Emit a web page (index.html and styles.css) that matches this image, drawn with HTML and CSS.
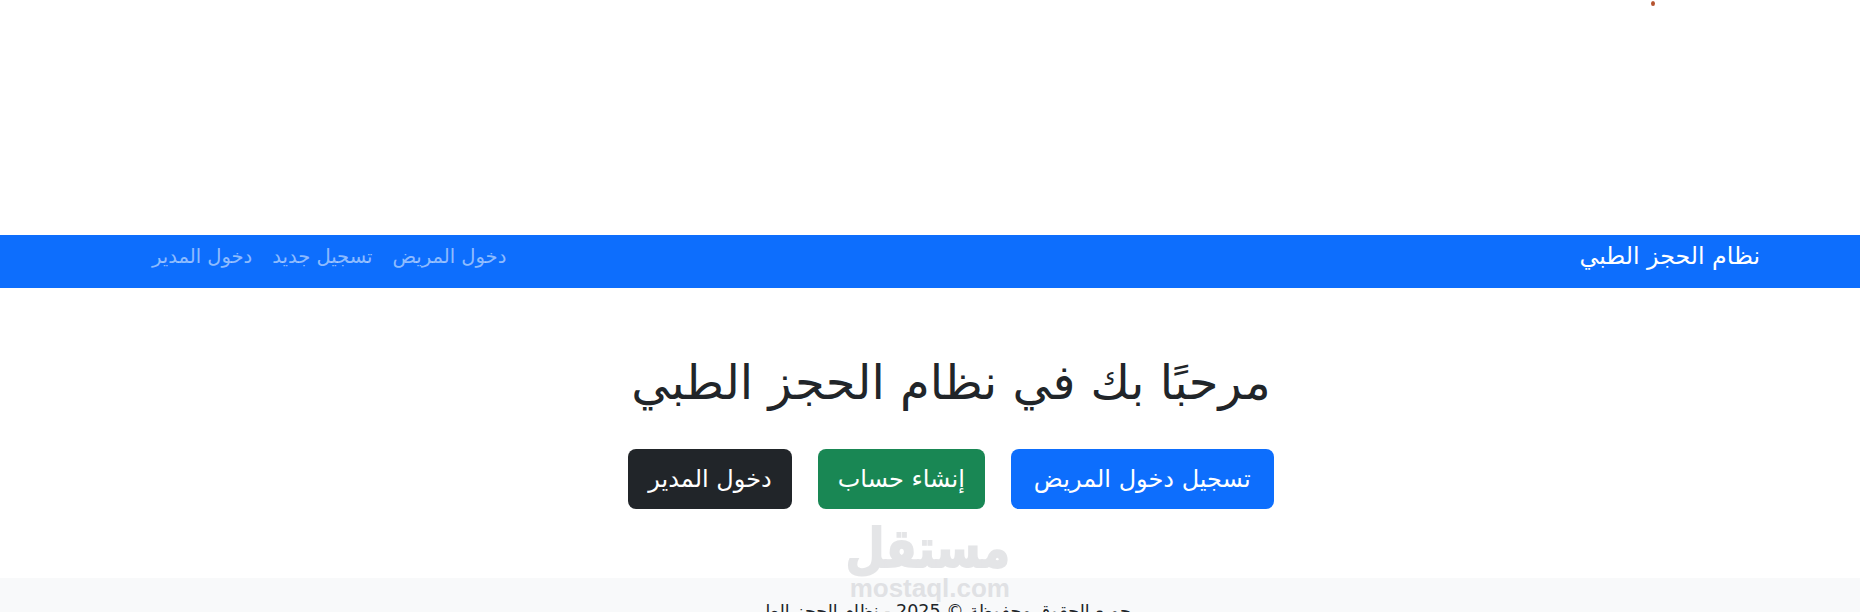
FILE: index.html
```html
<!DOCTYPE html>
<html lang="ar" dir="rtl">
<head>
<meta charset="utf-8">
<title>نظام الحجز الطبي</title>
<link rel="stylesheet" href="styles.css">
</head>
<body>
<div class="top-space"><span class="speck"></span></div>
<nav class="navbar">
  <a class="brand" href="#">نظام الحجز الطبي</a>
  <ul class="nav-links">
    <li><a href="#">دخول المريض</a></li>
    <li><a href="#">تسجيل جديد</a></li>
    <li><a href="#">دخول المدير</a></li>
  </ul>
</nav>
<main class="hero">
  <h1>مرحبًا بك في نظام الحجز الطبي</h1>
  <div class="actions">
    <a class="btn btn-blue" href="#">تسجيل دخول المريض</a>
    <a class="btn btn-green" href="#">إنشاء حساب</a>
    <a class="btn btn-dark" href="#">دخول المدير</a>
  </div>
</main>
<footer class="footer">جميع الحقوق محفوظة © 2025 - نظام الحجز الطبي</footer>
<div class="watermark">
  <span class="wm-ar">مستقل</span>
  <span class="wm-en">mostaql.com</span>
</div>
</body>
</html>
```
FILE: styles.css
```css
html, body { margin: 0; padding: 0; height: 612px; overflow: hidden; background: #fff; }
body { font-family: "DejaVu Sans", "Noto Sans", sans-serif; color: #212529; position: relative; font-size: 16px; }
a { text-decoration: none; }
.top-space { height: 235px; position: relative; }
.speck { position: absolute; left: 1651px; top: 1px; width: 4px; height: 5px; border-radius: 50%; background: #b5532f; }
.navbar { height: 53px; background: #0d6efd; display: flex; align-items: flex-start; padding: 0 100px 0 152px; justify-content: space-between; }
.brand { color: #fff; font-size: 23.7px; line-height: 42px; }
.nav-links { list-style: none; margin: 0; padding: 0; display: flex; gap: 20px; }
.nav-links a { color: rgba(255,255,255,.55); font-size: 19.5px; line-height: 43px; }
.hero { height: 290px; box-sizing: border-box; padding: 59px 0 0 42px; text-align: center; }
.hero h1 { margin: 0 0 32px; font-size: 48px; line-height: 70px; font-weight: 400; }
.actions { display: flex; justify-content: center; gap: 26px; }
.btn { display: block; box-sizing: border-box; height: 60px; line-height: 58px; font-size: 24px; color: #fff; border-radius: 8px; border: 1px solid transparent; }
.btn-blue { background: #0d6efd; padding: 0 22px; }
.btn-green { background: #198754; padding: 0 19px; }
.btn-dark { background: #212529; padding: 0 19px; }
.footer { background: #f8f9fa; height: 60px; padding: 21px 0 0 16px; box-sizing: border-box; text-align: center; color: #212529; font-size: 17.5px; line-height: 24px; }
.watermark { position: absolute; left: 850px; top: 515px; width: 160px; text-align: center; pointer-events: none; opacity: .35; color: #b4b6bc; }
.wm-ar { display: block; font-size: 45px; font-weight: 700; line-height: 60px; -webkit-text-stroke: 1.5px #b4b6bc; transform: translateY(9px) scaleY(1.2); transform-origin: 50% 90%; }
.wm-en { display: block; font-family: "Liberation Sans", sans-serif; font-size: 26px; font-weight: 700; line-height: 26px; }
```
